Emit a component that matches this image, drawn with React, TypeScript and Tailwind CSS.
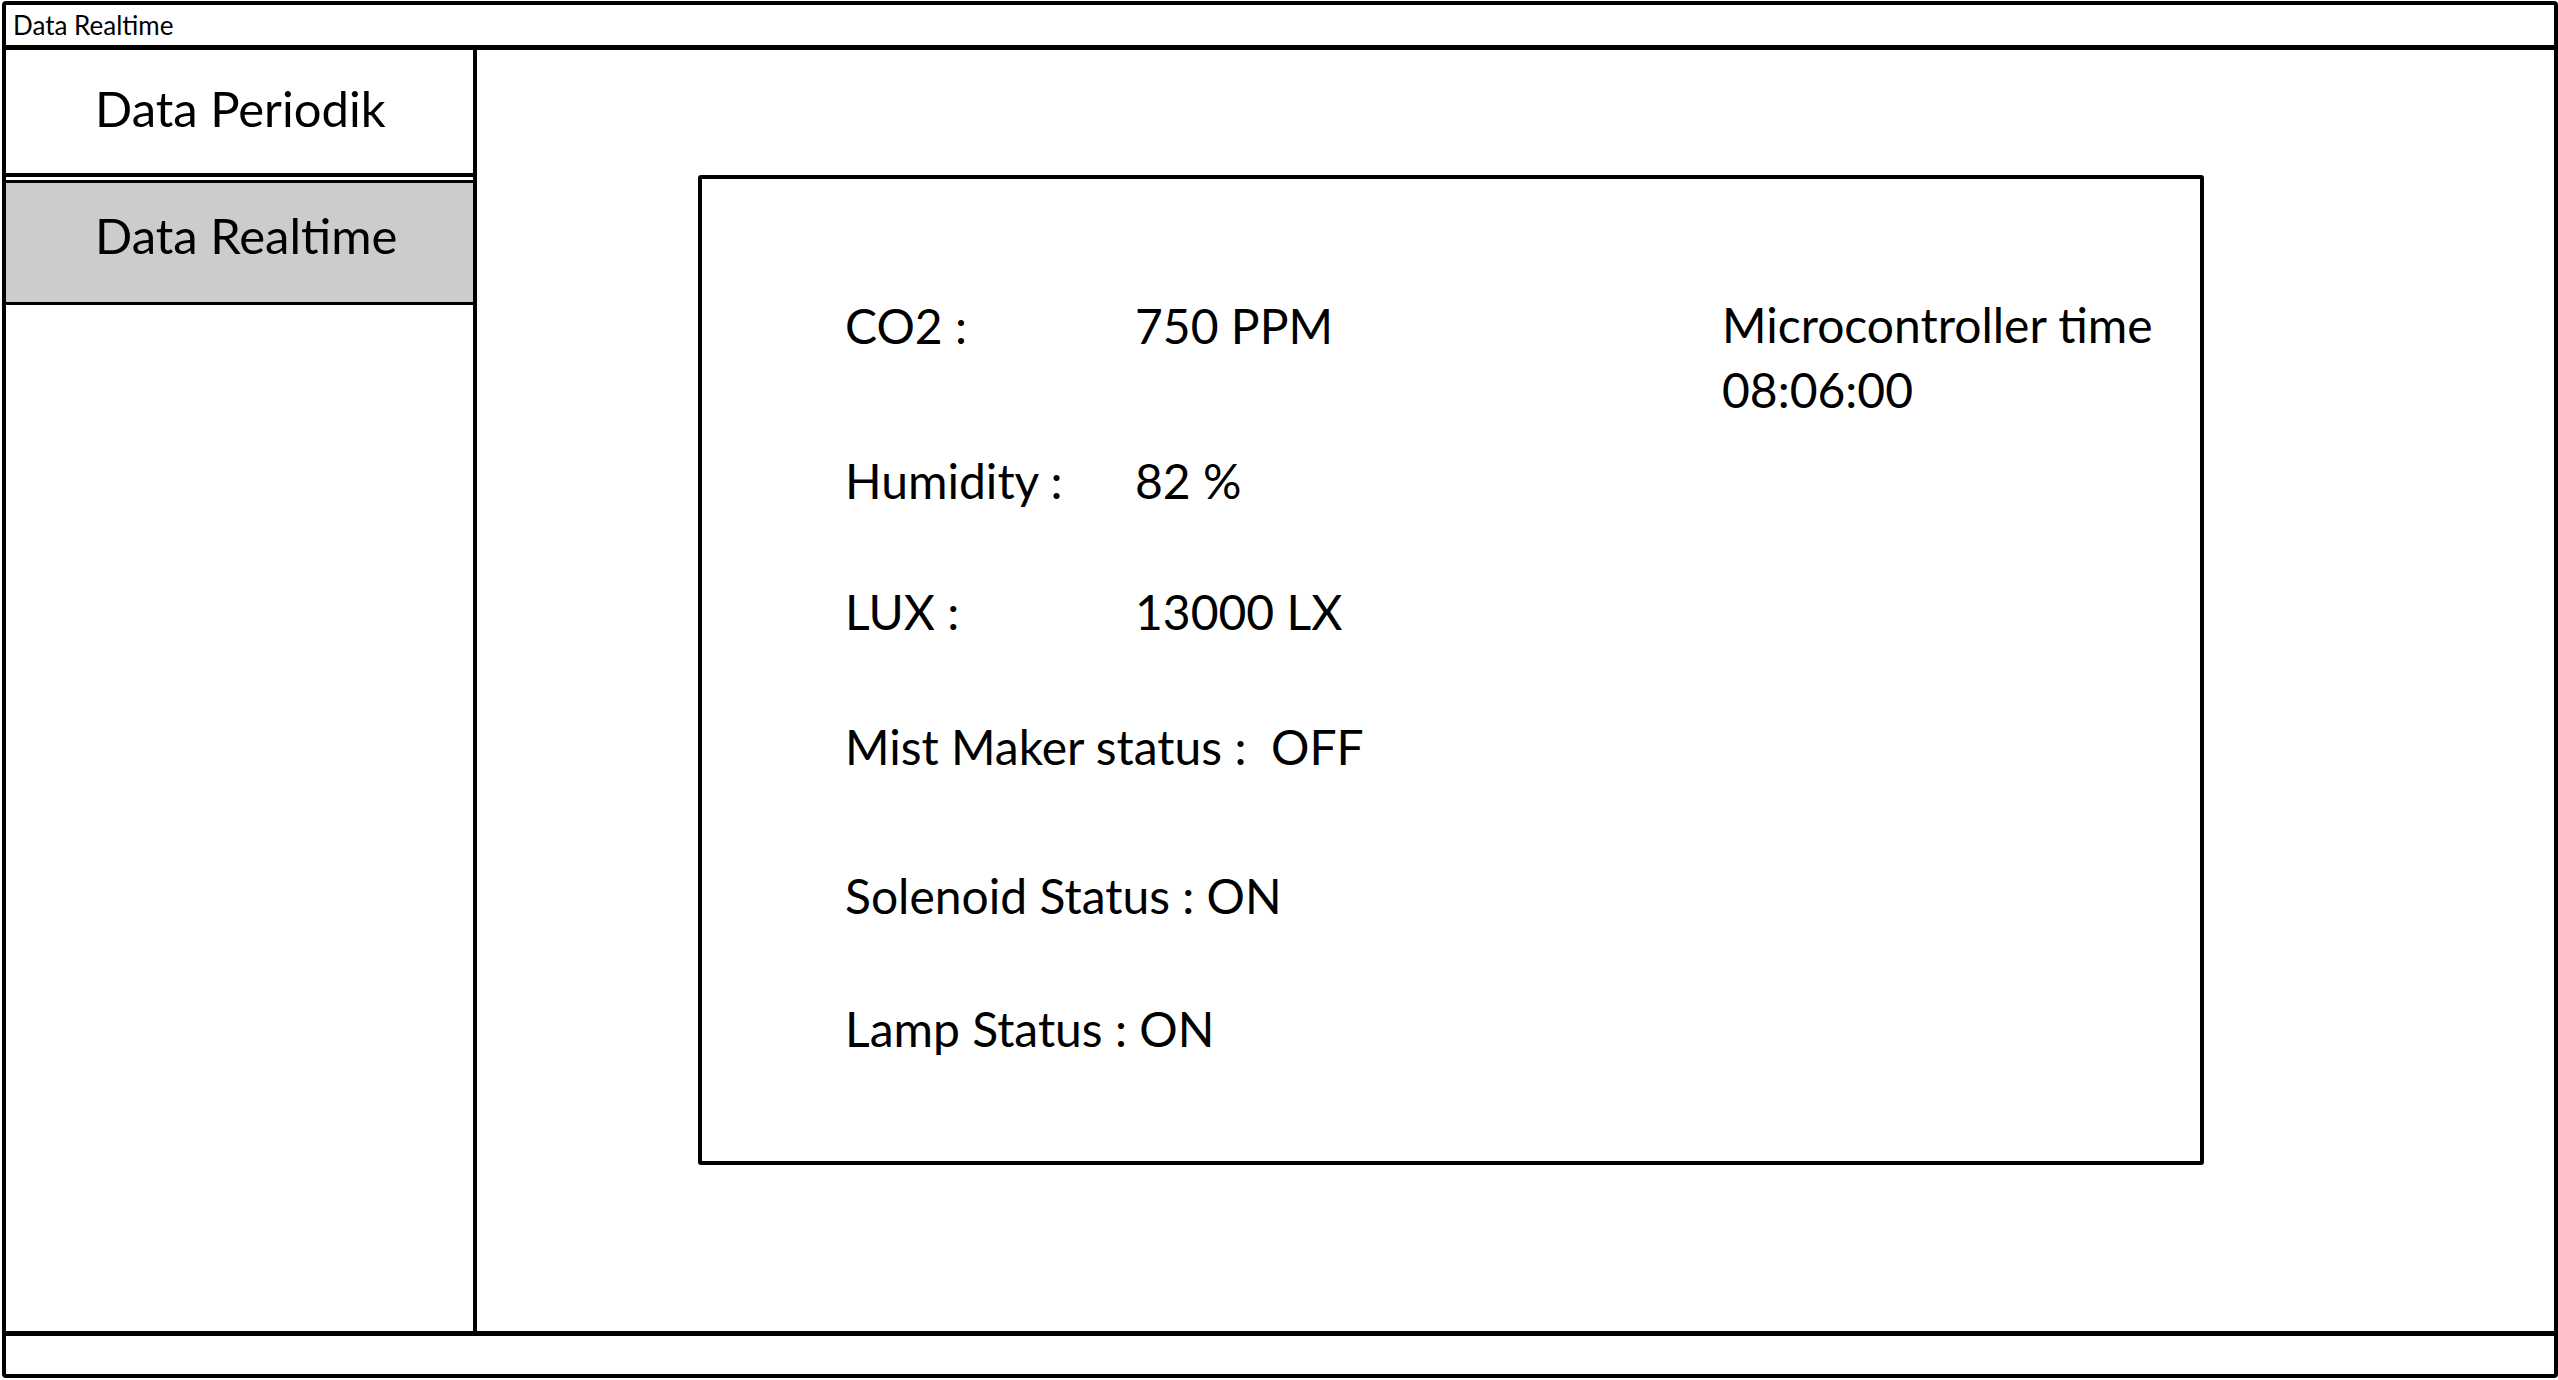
const font = { fontFamily: 'Lato, "Noto Sans", sans-serif' }

function Reading({ label, value, className }: { label: string; value: string; className?: string }) {
  return (
    <div className={`flex h-[60px] items-center ${className ?? ''}`}>
      <span className="w-[290px] shrink-0">{label}</span>
      <span>{value}</span>
    </div>
  )
}

export default function App() {
  return (
    <div className="w-[2558px] h-[1380px] bg-white text-black overflow-hidden" style={font}>
      <div className="ml-[2px] mt-[1px] w-[2556px] h-[1377px] border-[4px] border-black rounded-[4px] flex flex-col">
        {/* title bar */}
        <div className="h-[45px] shrink-0 border-b-[5px] border-black flex items-center pl-[7px] text-[26px] leading-none">
          Data Realtime
        </div>

        <div className="flex-1 flex min-h-0">
          {/* sidebar */}
          <div className="w-[471px] shrink-0 border-r-[4px] border-black flex flex-col">
            <div className="h-[127px] border-b-[4px] border-black flex items-center pl-[89px] pb-[6px] text-[49px]">
              Data Periodik
            </div>
            <div className="mt-[3px] h-[125px] border-y-[3px] border-black bg-[#cccccc] flex items-center pl-[89px] pb-[13px] text-[49px]">
              Data Realtime
            </div>
          </div>

          {/* main area */}
          <div className="flex-1">
            <div className="ml-[221px] mt-[125px] w-[1506px] h-[990px] border-[4px] border-black rounded-[3px] flex text-[48px]">
              <div className="w-[1020px] shrink-0 pl-[143px] pt-[117px] flex flex-col">
                <Reading label="CO2 :" value="750 PPM" />
                <Reading label="Humidity :" value="82 %" className="mt-[95px]" />
                <Reading label="LUX :" value="13000 LX" className="mt-[71px]" />
                <div className="mt-[75px] h-[60px] flex items-center whitespace-pre">Mist Maker status :  OFF</div>
                <div className="mt-[89px] h-[60px] flex items-center">Solenoid Status : ON</div>
                <div className="mt-[73px] h-[60px] flex items-center">Lamp Status : ON</div>
              </div>
              <div className="pt-[113px] leading-[65px]">
                <div>Microcontroller time</div>
                <div>08:06:00</div>
              </div>
            </div>
          </div>
        </div>

        {/* status bar */}
        <div className="h-[43px] shrink-0 border-t-[5px] border-black" />
      </div>
    </div>
  )
}
